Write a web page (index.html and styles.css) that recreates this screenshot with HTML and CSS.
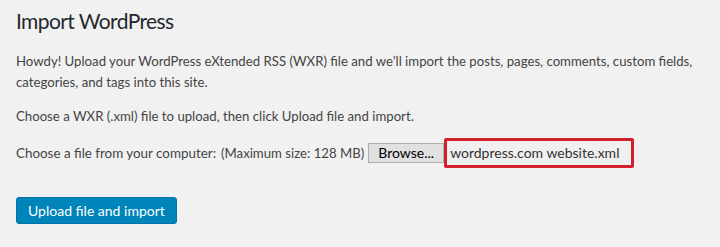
FILE: index.html
```html
<!DOCTYPE html>
<html>
<head>
<meta charset="utf-8">
<link rel="stylesheet" href="styles.css">
</head>
<body>
<div class="wrap">
  <h1 class="title">Import WordPress</h1>
  <p class="intro">Howdy! Upload your WordPress eXtended RSS (WXR) file and we’ll import the posts, pages, comments, custom fields, categories, and tags into this site.</p>
  <p class="intro">Choose a WXR (.xml) file to upload, then click Upload file and import.</p>
  <div class="file-row">
    <span class="label">Choose a file from your computer:</span>
    <span class="max">(Maximum size: 128 MB)</span>
    <span class="browse">Browse...</span>
    <span class="filename">wordpress.com website.xml</span>
  </div>
  <div class="actions">
    <span class="button-primary">Upload file and import</span>
  </div>
</div>
</body>
</html>
```
FILE: styles.css
```css
html, body {
  margin: 0;
  padding: 0;
  background: #f1f1f1;
}
body {
  font-family: "Lato", "Open Sans", sans-serif;
  color: #444;
  width: 720px;
  height: 247px;
  overflow: hidden;
}
.wrap {
  padding: 4px 8px 0 16px;
}
.title {
  margin: 0;
  font-size: 21px;
  letter-spacing: -0.6px;
  font-weight: 400;
  line-height: 34px;
  color: #23282d;
}
.intro {
  margin: 13px 0 0 0;
  font-size: 13.2px;
  line-height: 21px;
}
.file-row {
  display: flex;
  align-items: center;
  margin-top: 11px;
  font-size: 13.2px;
  white-space: nowrap;
}
.label {
  font-size: 13.4px;
  margin-right: 5px;
}
.max {
  margin-right: 4px;
}
.browse {
  box-sizing: border-box;
  height: 20px;
  line-height: 18px;
  padding: 0 9px;
  border: 1px solid #adadad;
  background: #e1e1e1;
  color: #000;
  font-size: 14px;
}
.filename {
  box-sizing: border-box;
  height: 30px;
  line-height: 24px;
  width: 190px;
  padding: 0 3px;
  border: 3px solid #d4202c;
  border-radius: 2px;
  background: #f0f0f0;
  color: #333;
  font-size: 14px;
  white-space: nowrap;
}
.actions {
  margin-top: 29px;
}
.button-primary {
  display: inline-block;
  box-sizing: border-box;
  height: 27px;
  line-height: 25px;
  padding: 0 11px;
  background: #0085ba;
  border: 1px solid #0073aa;
  border-radius: 3px;
  color: #fff;
  font-size: 14px;
}
```
